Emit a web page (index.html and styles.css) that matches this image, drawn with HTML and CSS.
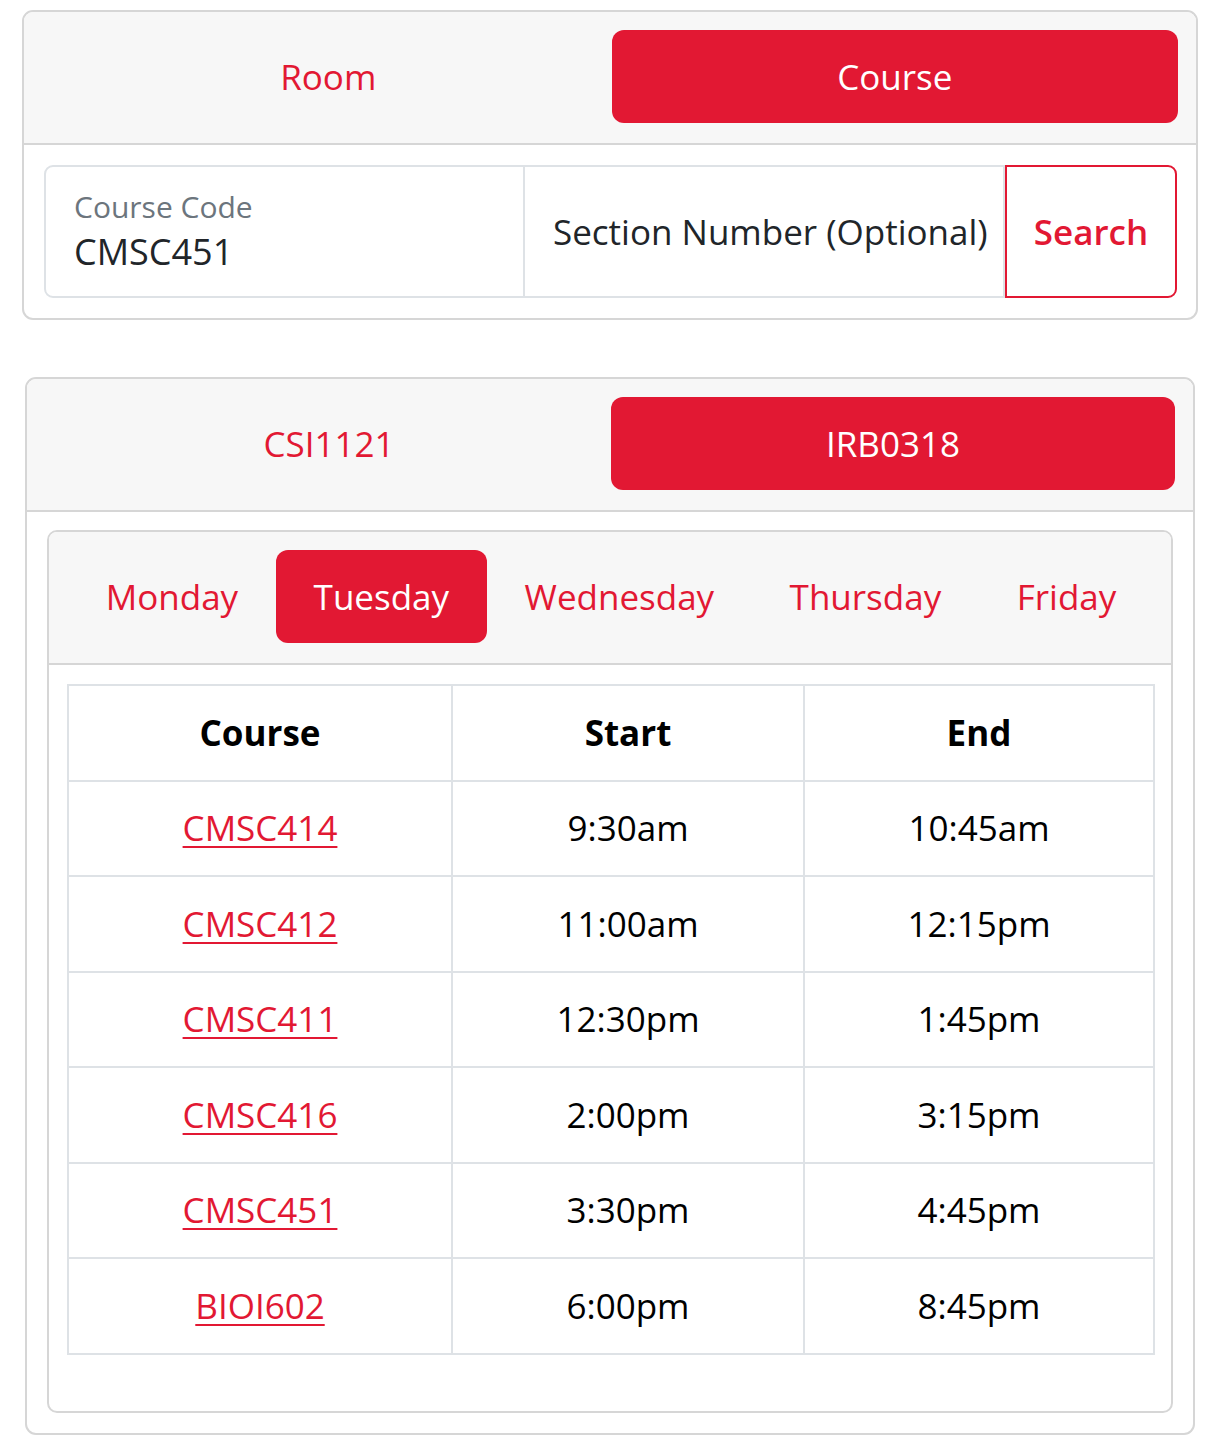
FILE: index.html
```html
<!DOCTYPE html>
<html lang="en">
<head>
<meta charset="utf-8">
<title>Schedule</title>
<link rel="stylesheet" href="styles.css">
</head>
<body>
<div class="card card-search">
  <div class="card-header header-search">
    <div class="tabs">
      <a class="tab">Room</a>
      <a class="tab active">Course</a>
    </div>
  </div>
  <div class="card-body body-search">
    <div class="input-group">
      <div class="field field-code">
        <span class="label">Course Code</span>
        <span class="value">CMSC451</span>
      </div>
      <div class="field field-section">
        <span class="placeholder">Section Number (Optional)</span>
      </div>
      <button class="btn-search">Search</button>
    </div>
  </div>
</div>

<div class="card card-rooms">
  <div class="card-header header-rooms">
    <div class="tabs">
      <a class="tab">CSI1121</a>
      <a class="tab active">IRB0318</a>
    </div>
  </div>
  <div class="card-body body-rooms">
    <div class="card card-days">
      <div class="card-header header-days">
        <div class="days">
          <a class="day">Monday</a>
          <a class="day active">Tuesday</a>
          <a class="day">Wednesday</a>
          <a class="day">Thursday</a>
          <a class="day">Friday</a>
        </div>
      </div>
      <div class="card-body body-days">
        <table class="schedule">
          <colgroup>
            <col class="col-course">
            <col class="col-start">
            <col class="col-end">
          </colgroup>
          <thead>
            <tr><th>Course</th><th>Start</th><th>End</th></tr>
          </thead>
          <tbody>
            <tr><td><a href="#">CMSC414</a></td><td>9:30am</td><td>10:45am</td></tr>
            <tr><td><a href="#">CMSC412</a></td><td>11:00am</td><td>12:15pm</td></tr>
            <tr><td><a href="#">CMSC411</a></td><td>12:30pm</td><td>1:45pm</td></tr>
            <tr><td><a href="#">CMSC416</a></td><td>2:00pm</td><td>3:15pm</td></tr>
            <tr><td><a href="#">CMSC451</a></td><td>3:30pm</td><td>4:45pm</td></tr>
            <tr><td><a href="#">BIOI602</a></td><td>6:00pm</td><td>8:45pm</td></tr>
          </tbody>
        </table>
      </div>
    </div>
  </div>
</div>
</body>
</html>
```

FILE: styles.css
```css
* { box-sizing: border-box; }

html, body {
  margin: 0;
  padding: 0;
  background: #fff;
}

body {
  font-family: "Open Sans", "Noto Sans", sans-serif;
  font-size: 35px;
  line-height: 54px;
  color: #212529;
}

.card {
  border: 2px solid #d6d6d6;
  border-radius: 11px;
  background: #fff;
  overflow: hidden;
}

.card-search {
  margin: 10px 18px 0 22px;
}

.card-rooms {
  margin: 57px 21px 0 25px;
}

.card-header {
  background: #f7f7f7;
  border-bottom: 2px solid #d6d6d6;
}

.header-search { padding: 18px 18px 20px 21px; }
.header-rooms { padding: 18px 18px 20px 20px; }

.tabs {
  display: flex;
}

.tab {
  flex: 1 1 0;
  height: 93px;
  display: flex;
  align-items: center;
  justify-content: center;
  color: #e21833;
  border-radius: 12px;
  cursor: pointer;
}

.tab.active {
  background: #e21833;
  color: #fff;
}

.body-search {
  padding: 20px 19px 20px 20px;
}

.input-group {
  display: flex;
  height: 133px;
}

.field {
  border: 2px solid #dee2e6;
  display: flex;
  flex-direction: column;
  justify-content: center;
  padding-left: 28px;
  background: #fff;
}

.field-code {
  width: 481px;
  border-radius: 9px 0 0 9px;
}

.field-section {
  width: 480px;
  border-left: none;
}

.label {
  font-size: 30px;
  line-height: 40px;
  color: #6c757d;
}

.value {
  font-size: 36px;
  line-height: 50px;
  color: #212529;
}

.placeholder {
  color: #212529;
}

.btn-search {
  flex: 1 1 auto;
  border: 2px solid #e21833;
  border-radius: 0 9px 9px 0;
  background: #fff;
  color: #e21833;
  font-family: inherit;
  font-size: 35px;
  font-weight: 600;
  padding: 0;
  cursor: pointer;
}

.body-rooms {
  padding: 18px 20px 20px 20px;
}

.card-days {
  border-radius: 10px;
}

.header-days {
  padding: 18px 17px 20px 19px;
}

.days {
  display: flex;
}

.day {
  flex: 1 1 auto;
  height: 93px;
  display: flex;
  align-items: center;
  justify-content: center;
  color: #e21833;
  border-radius: 12px;
  cursor: pointer;
}

.day.active {
  background: #e21833;
  color: #fff;
}

.body-days {
  padding: 19px 18px 20px 18px;
}

.schedule {
  width: 1086px;
  border-collapse: collapse;
  margin-bottom: 36px;
  table-layout: fixed;
}

.col-course { width: 384px; }
.col-start { width: 352px; }
.col-end { width: 350px; }

.schedule th,
.schedule td {
  border: 2px solid #dee2e6;
  height: 95.5px;
  padding: 0;
  text-align: center;
  vertical-align: middle;
  color: #000;
}

.schedule th {
  font-weight: 700;
}

.schedule a {
  color: #e21833;
  text-decoration: underline;
  text-decoration-thickness: 2px;
  text-underline-offset: 5px;
}
```
